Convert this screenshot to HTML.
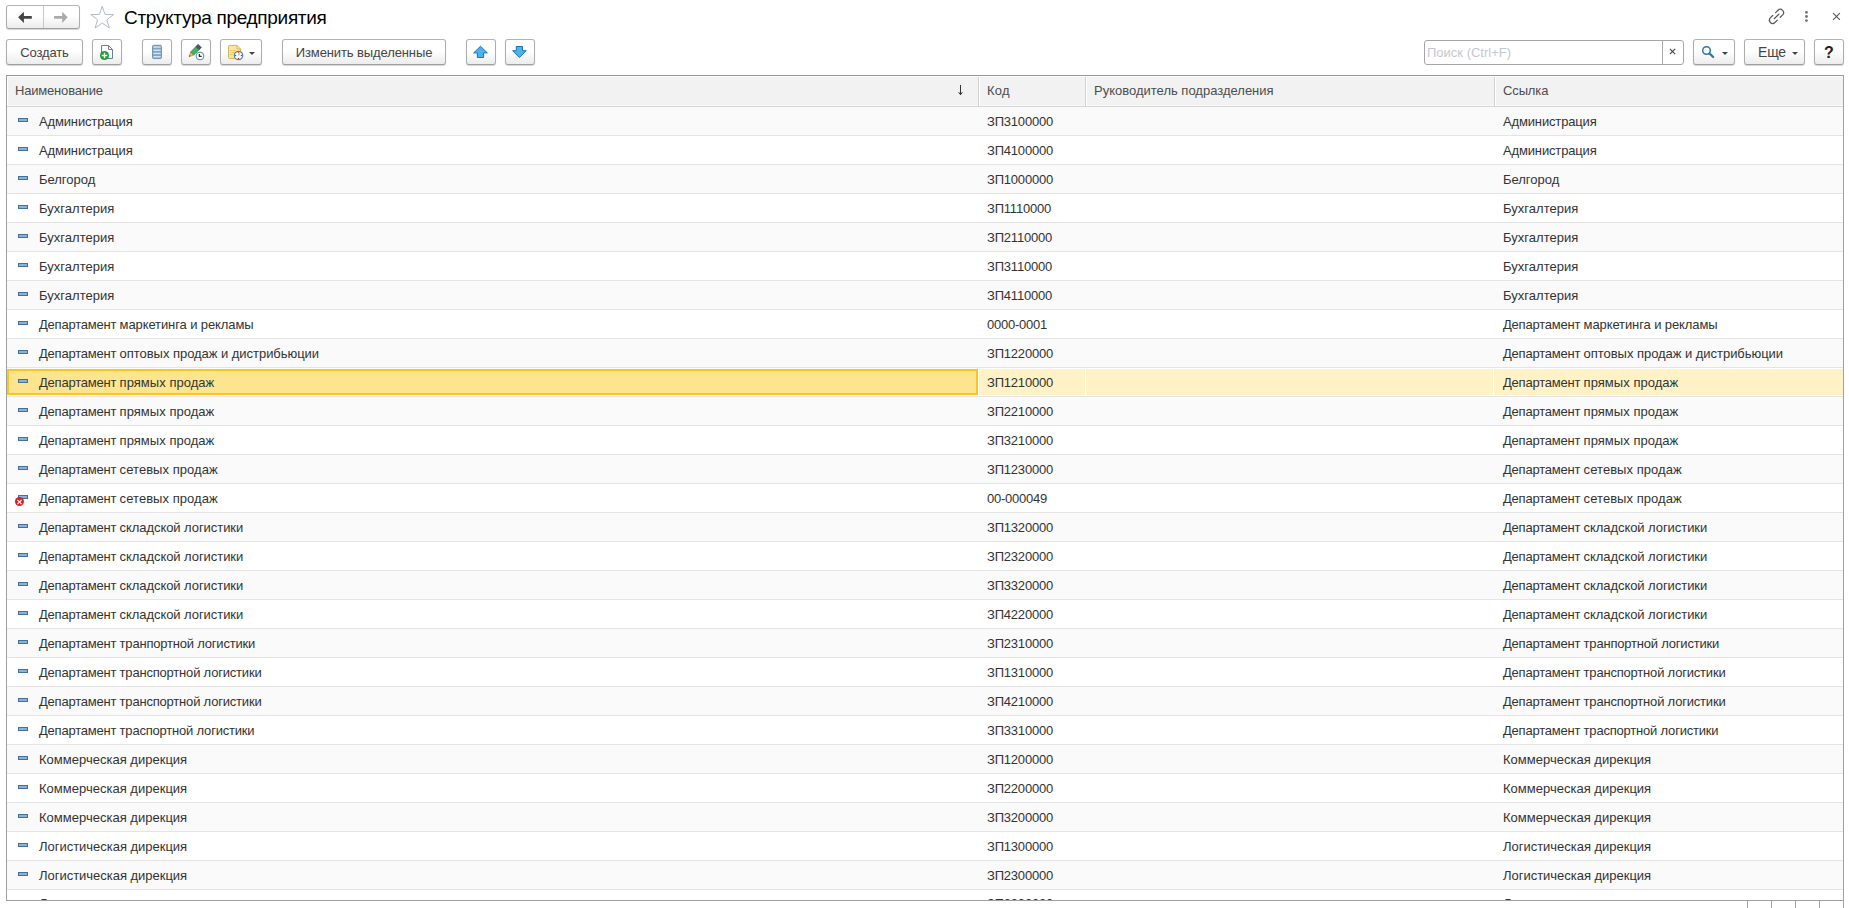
<!DOCTYPE html>
<html lang="ru"><head><meta charset="utf-8"><title>Структура предприятия</title>
<style>
*,*:before,*:after{box-sizing:border-box;margin:0;padding:0}
html,body{width:1849px;height:908px;overflow:hidden;background:#fff}
body{font-family:"Liberation Sans",Arial,sans-serif;font-size:13px;color:#333;position:relative}
.btn{position:absolute;top:39px;height:26px;border:1px solid #adadad;border-color:#b4b4b4 #adadad #9e9e9e #adadad;border-radius:3px;background:linear-gradient(#ffffff 0%,#ffffff 45%,#ececec 100%);box-shadow:0 1px 1px rgba(0,0,0,.17);text-align:center;line-height:26px;font-size:13px;color:#444}
.btn svg{position:absolute;left:50%;top:50%}
.nav{position:absolute;left:6px;top:5px;width:74px;height:24px;border:1px solid #adadad;border-color:#b4b4b4 #adadad #9e9e9e #adadad;border-radius:3px;background:linear-gradient(#fff 0%,#fff 45%,#ececec 100%);box-shadow:0 1px 1px rgba(0,0,0,.17)}
.nav:after{content:"";position:absolute;left:36px;top:0;width:1px;height:22px;background:#c8c8c8}
.title{position:absolute;left:124px;top:7px;font-size:19px;letter-spacing:-.3px;line-height:22px;color:#000;white-space:nowrap}
.search{position:absolute;left:1424px;top:40px;width:260px;height:25px;border:1px solid #a6a6a6;border-radius:3px;background:#fff}
.search span{position:absolute;left:2px;top:0;line-height:23px;font-size:13px;color:#c4c8d0}
.search i{position:absolute;left:237px;top:0;width:1px;height:23px;background:#aaa}
.search b{position:absolute;left:238px;width:21px;top:0;line-height:21px;text-align:center;font-weight:normal;font-size:14px;color:#555}
.caret{position:absolute;width:0;height:0;border-left:3px solid transparent;border-right:3px solid transparent;border-top:3px solid #444;top:12px}
.tbl{position:absolute;left:6px;top:75px;width:1838px;height:826px;border:1px solid #a0a0a0;border-top-color:#999;overflow:hidden;background:#fff}
.hd{position:absolute;left:0;top:0;width:1836px;height:31px;background:#f2f2f2;border-bottom:1px solid #d6d6d6;box-shadow:inset 1px 1px 0 #fff,inset 0 -1px 0 #fafafa}
.hd span{position:absolute;top:0;line-height:29px;font-size:13px;color:#4d4d4d;white-space:nowrap}
.hd i{position:absolute;top:1px;height:29px;width:2px;border-left:1px solid #d0d0d0;background:#fff}
.r{position:absolute;left:0;width:1836px;height:29px;border-bottom:1px solid #e4e4e4;background:#fff}
.r.a{background:#fafafa}
.r u{text-decoration:none;letter-spacing:-.217px}
.r>span{position:absolute;top:0;height:28px;line-height:30px;white-space:nowrap;color:#333;font-size:13px}
.r.last>span{top:-1px}
.c1{left:32px}.c2{left:980px}.c4{left:1496px}
.ic{position:absolute;left:11px;top:11px;width:10px;height:4px;background:#86b3dc;border:1px solid #44709b}
.ic.del b{position:absolute;left:-4px;top:1px;width:9px;height:9px;border-radius:50%;background:#d3222a}
.ic.del b:before,.ic.del b:after{content:"";position:absolute;left:4px;top:1.5px;width:1px;height:6px;background:#fff;transform:rotate(45deg)}
.ic.del b:after{transform:rotate(-45deg)}
.r.sel{background:#fff}
.r.sel:before{content:"";position:absolute;left:972px;top:1px;width:864px;height:26px;background:#fff2c6}
.r.sel:after{content:"";position:absolute;left:0;top:1px;width:971px;height:26px;border:2px solid #f9c61c;background:#fde58f}
.r.sel .ic,.r.sel>span{z-index:2}
.r.sel .c3{left:1078px;width:409px;top:1px;height:26px;border-left:1px solid #fff;border-right:1px solid #fff}
</style></head><body>
<div class="nav">
<svg width="74" height="22" viewBox="0 0 74 22" style="position:absolute;left:-1px;top:0"><path d="M12.1 11.3 L17.9 5.7 V9.9 H25.8 V12.7 H17.9 V16.9 Z" fill="#444"/><path d="M61.7 11.3 L56.2 5.7 V9.9 H48.1 V12.7 H56.2 V16.9 Z" fill="#aaa"/></svg>
</div>
<svg width="26" height="26" viewBox="0 0 26 26" style="position:absolute;left:90px;top:5px"><path d="M12.2 1.3 L15.0 9.4 L23.6 9.6 L16.8 14.8 L19.3 23.0 L12.2 18.1 L5.1 23.0 L7.6 14.8 L0.8 9.6 L9.4 9.4 Z" fill="#fff" stroke="#b4bbc4" stroke-width="1" stroke-linejoin="miter"/></svg>
<div class="title">Структура предприятия</div>
<svg width="89" height="26" viewBox="0 0 89 26" style="position:absolute;left:1760px;top:4px">
<g fill="none" stroke="#5a5a5a" stroke-width="1.25" stroke-linecap="round"><path d="M15.62 8.62 L18.02 6.22 A3.3 3.3 0 0 1 22.68 10.88 L20.28 13.28"/><path d="M17.34 16.16 L14.94 18.56 A3.3 3.3 0 0 1 10.28 13.9 L12.68 11.5"/><path d="M14.2 14.7 L18.8 10.2"/></g>
<g fill="#777"><circle cx="46.45" cy="8.4" r="1.45"/><circle cx="46.45" cy="12.5" r="1.45"/><circle cx="46.45" cy="16.6" r="1.45"/></g>
<path d="M73.1 9.1 L79.9 15.9 M79.9 9.1 L73.1 15.9" stroke="#555" stroke-width="1.05" fill="none"/>
</svg>

<div class="btn" style="left:6px;width:77px;letter-spacing:-.16px">Создать</div>
<div class="btn" style="left:92px;width:30px"></div>
<div class="btn" style="left:142px;width:30px"></div>
<div class="btn" style="left:181px;width:30px"></div>
<div class="btn" style="left:220px;width:42px"><i class="caret" style="left:28px"></i></div>
<div class="btn" style="left:282px;width:164px;letter-spacing:-.11px">Изменить выделенные</div>
<div class="btn" style="left:466px;width:30px"></div>
<div class="btn" style="left:505px;width:30px"></div>

<div class="search"><span>Поиск (Ctrl+F)</span><i></i></div>
<div class="btn" style="left:1693px;width:42px"><i class="caret" style="left:28px"></i></div>
<div class="btn" style="left:1744px;width:61px;text-align:left;padding-left:13px;font-size:14px;line-height:24px;letter-spacing:-.2px">Еще<i class="caret" style="left:47px"></i></div>
<div class="btn" style="left:1814px;width:30px;font-weight:bold;color:#222;font-size:16px;line-height:25px">?</div>

<svg width="1849" height="32" viewBox="0 36 1849 32" style="position:absolute;left:0;top:36px;pointer-events:none">
<!-- copy -->
<path d="M101.5 45.5 H108.5 L112.5 49.5 V58.5 H101.5 Z" fill="#fcfcfd" stroke="#6a7f9c" stroke-width="1" stroke-linejoin="round"/>
<path d="M108.5 45.5 V49.5 H112.5" fill="none" stroke="#6a7f9c" stroke-width="1" stroke-linejoin="round"/>
<circle cx="104.5" cy="55.5" r="4.5" fill="#1f9d30"/>
<path d="M104.5 52.7 V58.3 M101.7 55.5 H107.3" stroke="#fff" stroke-width="1.4"/>
<!-- list -->
<rect x="152.5" y="45.3" width="9" height="13.3" rx="1.2" fill="#7fa3c4" stroke="#5f86a8" stroke-width=".8"/>
<g fill="#d3e2ef"><rect x="153.3" y="46.3" width="7.4" height="1.5"/><rect x="153.3" y="49.5" width="7.4" height="1.5"/><rect x="153.3" y="52.7" width="7.4" height="1.5"/><rect x="153.3" y="56" width="7.4" height="1.5"/></g>
<!-- pencil -->
<path d="M189 56.7 L190.6 51.9 L193.8 55.1 Z" fill="#e9b96c" stroke="#9a7440" stroke-width=".5"/>
<path d="M189 56.7 L189.6 54.9 L190.8 56.1 Z" fill="#5a4020"/>
<path d="M190.6 51.9 L195.9 46.6 L199.1 49.8 L193.8 55.1 Z" fill="#3fb25e" stroke="#2a8a45" stroke-width=".7" stroke-linejoin="round"/>
<path d="M195.9 46.6 L198.1 44.3 L201.4 47.6 L199.1 49.8 Z" fill="#4a5866" stroke="#3f4b57" stroke-width=".6" stroke-linejoin="round"/>
<circle cx="200" cy="56" r="3.9" fill="#fff" stroke="#5a86ad" stroke-width="1"/>
<path d="M199.4 54 V56.3 H201.7" fill="none" stroke="#2b2b2b" stroke-width="1.3"/>
<!-- doc clock -->
<path d="M229.3 45.4 H237.2 L240.6 48.9 V58.4 H229.3 Q228.5 58.4 228.5 57.6 V46.2 Q228.5 45.4 229.3 45.4 Z" fill="#f8e6a0" stroke="#dab64e" stroke-width="1" stroke-linejoin="round"/>
<path d="M237.2 45.4 V48.9 H240.6" fill="#fdf3c8" stroke="#dab64e" stroke-width="1" stroke-linejoin="round"/>
<path d="M230.3 50.4 h2 m1 0 h2 M230.3 52.5 h1 m1 0 h2 M230.3 54.5 h2" stroke="#e2c562" stroke-width="1"/>
<circle cx="238.5" cy="55.5" r="4.2" fill="#fff" stroke="#4a86c2" stroke-width="1.2"/>
<path d="M238.5 55.5 L239.6 53.3" stroke="#9bb8e6" stroke-width="1.2"/>
<g fill="#ee1c24"><circle cx="238.5" cy="52.6" r=".7"/><circle cx="238.5" cy="58.4" r=".7"/><circle cx="235.6" cy="55.5" r=".7"/><circle cx="241.4" cy="55.5" r=".7"/></g>
<!-- search -->
<path d="M1669.9 48.9 L1675.2 54.2 M1675.2 48.9 L1669.9 54.2" stroke="#444" stroke-width="1.05" fill="none"/>
<circle cx="1706.5" cy="50.5" r="3.8" fill="none" stroke="#2b77a8" stroke-width="1.5"/>
<path d="M1709.6 53.6 L1713.2 57" stroke="#2b77a8" stroke-width="2.2" stroke-linecap="round"/>
<!-- up / down -->
<path d="M480.5 46.3 L487.3 52.9 H483.6 V57.5 H477.4 V52.9 H473.7 Z" fill="#4db3ee" stroke="#1f73ad" stroke-width="1" stroke-linejoin="round"/>
<path d="M516.3 46.5 H522.5 V50.7 H526.2 L519.4 57.5 L512.6 50.7 H516.3 Z" fill="#4db3ee" stroke="#1f73ad" stroke-width="1" stroke-linejoin="round"/>
</svg>
<div class="tbl">
<div class="hd"><span style="left:8px;letter-spacing:-.19px">Наименование</span><svg width="8" height="12" viewBox="0 0 8 12" style="position:absolute;left:950px;top:9px"><path d="M3.5 0 V9.5" fill="none" stroke="#333" stroke-width="1"/><path d="M0.9 7.1 L3.5 10.3 L6.1 7.1 L3.5 8 Z" fill="#333"/></svg><i style="left:971px"></i><span style="left:980px;letter-spacing:.2px">Код</span><i style="left:1078px"></i><span style="left:1087px">Руководитель подразделения</span><i style="left:1487px"></i><span style="left:1496px;letter-spacing:-.12px">Ссылка</span></div>
<div class="r a" style="top:31px"><i class="ic"></i><span class="c1" style="letter-spacing:-0.15px">Администрация</span><span class="c2" style="letter-spacing:-0.201px">ЗП3100000</span><span class="c3"></span><span class="c4" style="letter-spacing:-0.15px">Администрация</span></div>
<div class="r" style="top:60px"><i class="ic"></i><span class="c1" style="letter-spacing:-0.15px">Администрация</span><span class="c2" style="letter-spacing:-0.201px">ЗП4100000</span><span class="c3"></span><span class="c4" style="letter-spacing:-0.15px">Администрация</span></div>
<div class="r a" style="top:89px"><i class="ic"></i><span class="c1" style="letter-spacing:-0.014px">Белгород</span><span class="c2" style="letter-spacing:-0.201px">ЗП1000000</span><span class="c3"></span><span class="c4" style="letter-spacing:-0.014px">Белгород</span></div>
<div class="r" style="top:118px"><i class="ic"></i><span class="c1" style="letter-spacing:0.02px">Бухгалтерия</span><span class="c2" style="letter-spacing:-0.201px">ЗП1110000</span><span class="c3"></span><span class="c4" style="letter-spacing:0.02px">Бухгалтерия</span></div>
<div class="r a" style="top:147px"><i class="ic"></i><span class="c1" style="letter-spacing:0.02px">Бухгалтерия</span><span class="c2" style="letter-spacing:-0.201px">ЗП2110000</span><span class="c3"></span><span class="c4" style="letter-spacing:0.02px">Бухгалтерия</span></div>
<div class="r" style="top:176px"><i class="ic"></i><span class="c1" style="letter-spacing:0.02px">Бухгалтерия</span><span class="c2" style="letter-spacing:-0.201px">ЗП3110000</span><span class="c3"></span><span class="c4" style="letter-spacing:0.02px">Бухгалтерия</span></div>
<div class="r a" style="top:205px"><i class="ic"></i><span class="c1" style="letter-spacing:0.02px">Бухгалтерия</span><span class="c2" style="letter-spacing:-0.201px">ЗП4110000</span><span class="c3"></span><span class="c4" style="letter-spacing:0.02px">Бухгалтерия</span></div>
<div class="r" style="top:234px"><i class="ic"></i><span class="c1" style="letter-spacing:-0.105px"><u>Департамент </u>маркетинга и рекламы</span><span class="c2" style="letter-spacing:-0.241px">0000-0001</span><span class="c3"></span><span class="c4" style="letter-spacing:-0.105px"><u>Департамент </u>маркетинга и рекламы</span></div>
<div class="r a" style="top:263px"><i class="ic"></i><span class="c1" style="letter-spacing:-0.04px"><u>Департамент </u>оптовых продаж и дистрибьюции</span><span class="c2" style="letter-spacing:-0.201px">ЗП1220000</span><span class="c3"></span><span class="c4" style="letter-spacing:-0.04px"><u>Департамент </u>оптовых продаж и дистрибьюции</span></div>
<div class="r sel" style="top:292px"><i class="ic"></i><span class="c1" style="letter-spacing:0.033px"><u>Департамент </u>прямых продаж</span><span class="c2" style="letter-spacing:-0.201px">ЗП1210000</span><span class="c3"></span><span class="c4" style="letter-spacing:0.033px"><u>Департамент </u>прямых продаж</span></div>
<div class="r a" style="top:321px"><i class="ic"></i><span class="c1" style="letter-spacing:0.033px"><u>Департамент </u>прямых продаж</span><span class="c2" style="letter-spacing:-0.201px">ЗП2210000</span><span class="c3"></span><span class="c4" style="letter-spacing:0.033px"><u>Департамент </u>прямых продаж</span></div>
<div class="r" style="top:350px"><i class="ic"></i><span class="c1" style="letter-spacing:0.033px"><u>Департамент </u>прямых продаж</span><span class="c2" style="letter-spacing:-0.201px">ЗП3210000</span><span class="c3"></span><span class="c4" style="letter-spacing:0.033px"><u>Департамент </u>прямых продаж</span></div>
<div class="r a" style="top:379px"><i class="ic"></i><span class="c1" style="letter-spacing:0.054px"><u>Департамент </u>сетевых продаж</span><span class="c2" style="letter-spacing:-0.201px">ЗП1230000</span><span class="c3"></span><span class="c4" style="letter-spacing:0.054px"><u>Департамент </u>сетевых продаж</span></div>
<div class="r" style="top:408px"><i class="ic del"><b></b></i><span class="c1" style="letter-spacing:0.054px"><u>Департамент </u>сетевых продаж</span><span class="c2" style="letter-spacing:-0.241px">00-000049</span><span class="c3"></span><span class="c4" style="letter-spacing:0.054px"><u>Департамент </u>сетевых продаж</span></div>
<div class="r a" style="top:437px"><i class="ic"></i><span class="c1" style="letter-spacing:-0.067px"><u>Департамент </u>складской логистики</span><span class="c2" style="letter-spacing:-0.201px">ЗП1320000</span><span class="c3"></span><span class="c4" style="letter-spacing:-0.067px"><u>Департамент </u>складской логистики</span></div>
<div class="r" style="top:466px"><i class="ic"></i><span class="c1" style="letter-spacing:-0.067px"><u>Департамент </u>складской логистики</span><span class="c2" style="letter-spacing:-0.201px">ЗП2320000</span><span class="c3"></span><span class="c4" style="letter-spacing:-0.067px"><u>Департамент </u>складской логистики</span></div>
<div class="r a" style="top:495px"><i class="ic"></i><span class="c1" style="letter-spacing:-0.067px"><u>Департамент </u>складской логистики</span><span class="c2" style="letter-spacing:-0.201px">ЗП3320000</span><span class="c3"></span><span class="c4" style="letter-spacing:-0.067px"><u>Департамент </u>складской логистики</span></div>
<div class="r" style="top:524px"><i class="ic"></i><span class="c1" style="letter-spacing:-0.067px"><u>Департамент </u>складской логистики</span><span class="c2" style="letter-spacing:-0.201px">ЗП4220000</span><span class="c3"></span><span class="c4" style="letter-spacing:-0.067px"><u>Департамент </u>складской логистики</span></div>
<div class="r a" style="top:553px"><i class="ic"></i><span class="c1" style="letter-spacing:-0.2px"><u>Департамент </u>транпортной логистики</span><span class="c2" style="letter-spacing:-0.201px">ЗП2310000</span><span class="c3"></span><span class="c4" style="letter-spacing:-0.2px"><u>Департамент </u>транпортной логистики</span></div>
<div class="r" style="top:582px"><i class="ic"></i><span class="c1" style="letter-spacing:-0.195px"><u>Департамент </u>транспортной логистики</span><span class="c2" style="letter-spacing:-0.201px">ЗП1310000</span><span class="c3"></span><span class="c4" style="letter-spacing:-0.195px"><u>Департамент </u>транспортной логистики</span></div>
<div class="r a" style="top:611px"><i class="ic"></i><span class="c1" style="letter-spacing:-0.195px"><u>Департамент </u>транспортной логистики</span><span class="c2" style="letter-spacing:-0.201px">ЗП4210000</span><span class="c3"></span><span class="c4" style="letter-spacing:-0.195px"><u>Департамент </u>транспортной логистики</span></div>
<div class="r" style="top:640px"><i class="ic"></i><span class="c1" style="letter-spacing:-0.2px"><u>Департамент </u>траспортной логистики</span><span class="c2" style="letter-spacing:-0.201px">ЗП3310000</span><span class="c3"></span><span class="c4" style="letter-spacing:-0.2px"><u>Департамент </u>траспортной логистики</span></div>
<div class="r a" style="top:669px"><i class="ic"></i><span class="c1" style="letter-spacing:0.01px">Коммерческая дирекция</span><span class="c2" style="letter-spacing:-0.201px">ЗП1200000</span><span class="c3"></span><span class="c4" style="letter-spacing:0.01px">Коммерческая дирекция</span></div>
<div class="r" style="top:698px"><i class="ic"></i><span class="c1" style="letter-spacing:0.01px">Коммерческая дирекция</span><span class="c2" style="letter-spacing:-0.201px">ЗП2200000</span><span class="c3"></span><span class="c4" style="letter-spacing:0.01px">Коммерческая дирекция</span></div>
<div class="r a" style="top:727px"><i class="ic"></i><span class="c1" style="letter-spacing:0.01px">Коммерческая дирекция</span><span class="c2" style="letter-spacing:-0.201px">ЗП3200000</span><span class="c3"></span><span class="c4" style="letter-spacing:0.01px">Коммерческая дирекция</span></div>
<div class="r" style="top:756px"><i class="ic"></i><span class="c1" style="letter-spacing:-0.024px">Логистическая дирекция</span><span class="c2" style="letter-spacing:-0.201px">ЗП1300000</span><span class="c3"></span><span class="c4" style="letter-spacing:-0.024px">Логистическая дирекция</span></div>
<div class="r a" style="top:785px"><i class="ic"></i><span class="c1" style="letter-spacing:-0.024px">Логистическая дирекция</span><span class="c2" style="letter-spacing:-0.201px">ЗП2300000</span><span class="c3"></span><span class="c4" style="letter-spacing:-0.024px">Логистическая дирекция</span></div>
<div class="r last" style="top:814px"><i class="ic"></i><span class="c1" style="letter-spacing:-0.024px">Логистическая дирекция</span><span class="c2" style="letter-spacing:-0.201px">ЗП3300000</span><span class="c3"></span><span class="c4" style="letter-spacing:-0.024px">Логистическая дирекция</span></div></div>
<div style="position:absolute;left:1747px;top:901px;width:97px;height:7px;border-right:1px solid #a0a0a0">
<i style="position:absolute;left:0;top:0;width:1px;height:7px;background:#a0a0a0"></i>
<i style="position:absolute;left:24px;top:0;width:1px;height:7px;background:#a0a0a0"></i>
<i style="position:absolute;left:48px;top:0;width:1px;height:7px;background:#a0a0a0"></i>
<i style="position:absolute;left:72px;top:0;width:1px;height:7px;background:#a0a0a0"></i>
</div>
</body></html>
